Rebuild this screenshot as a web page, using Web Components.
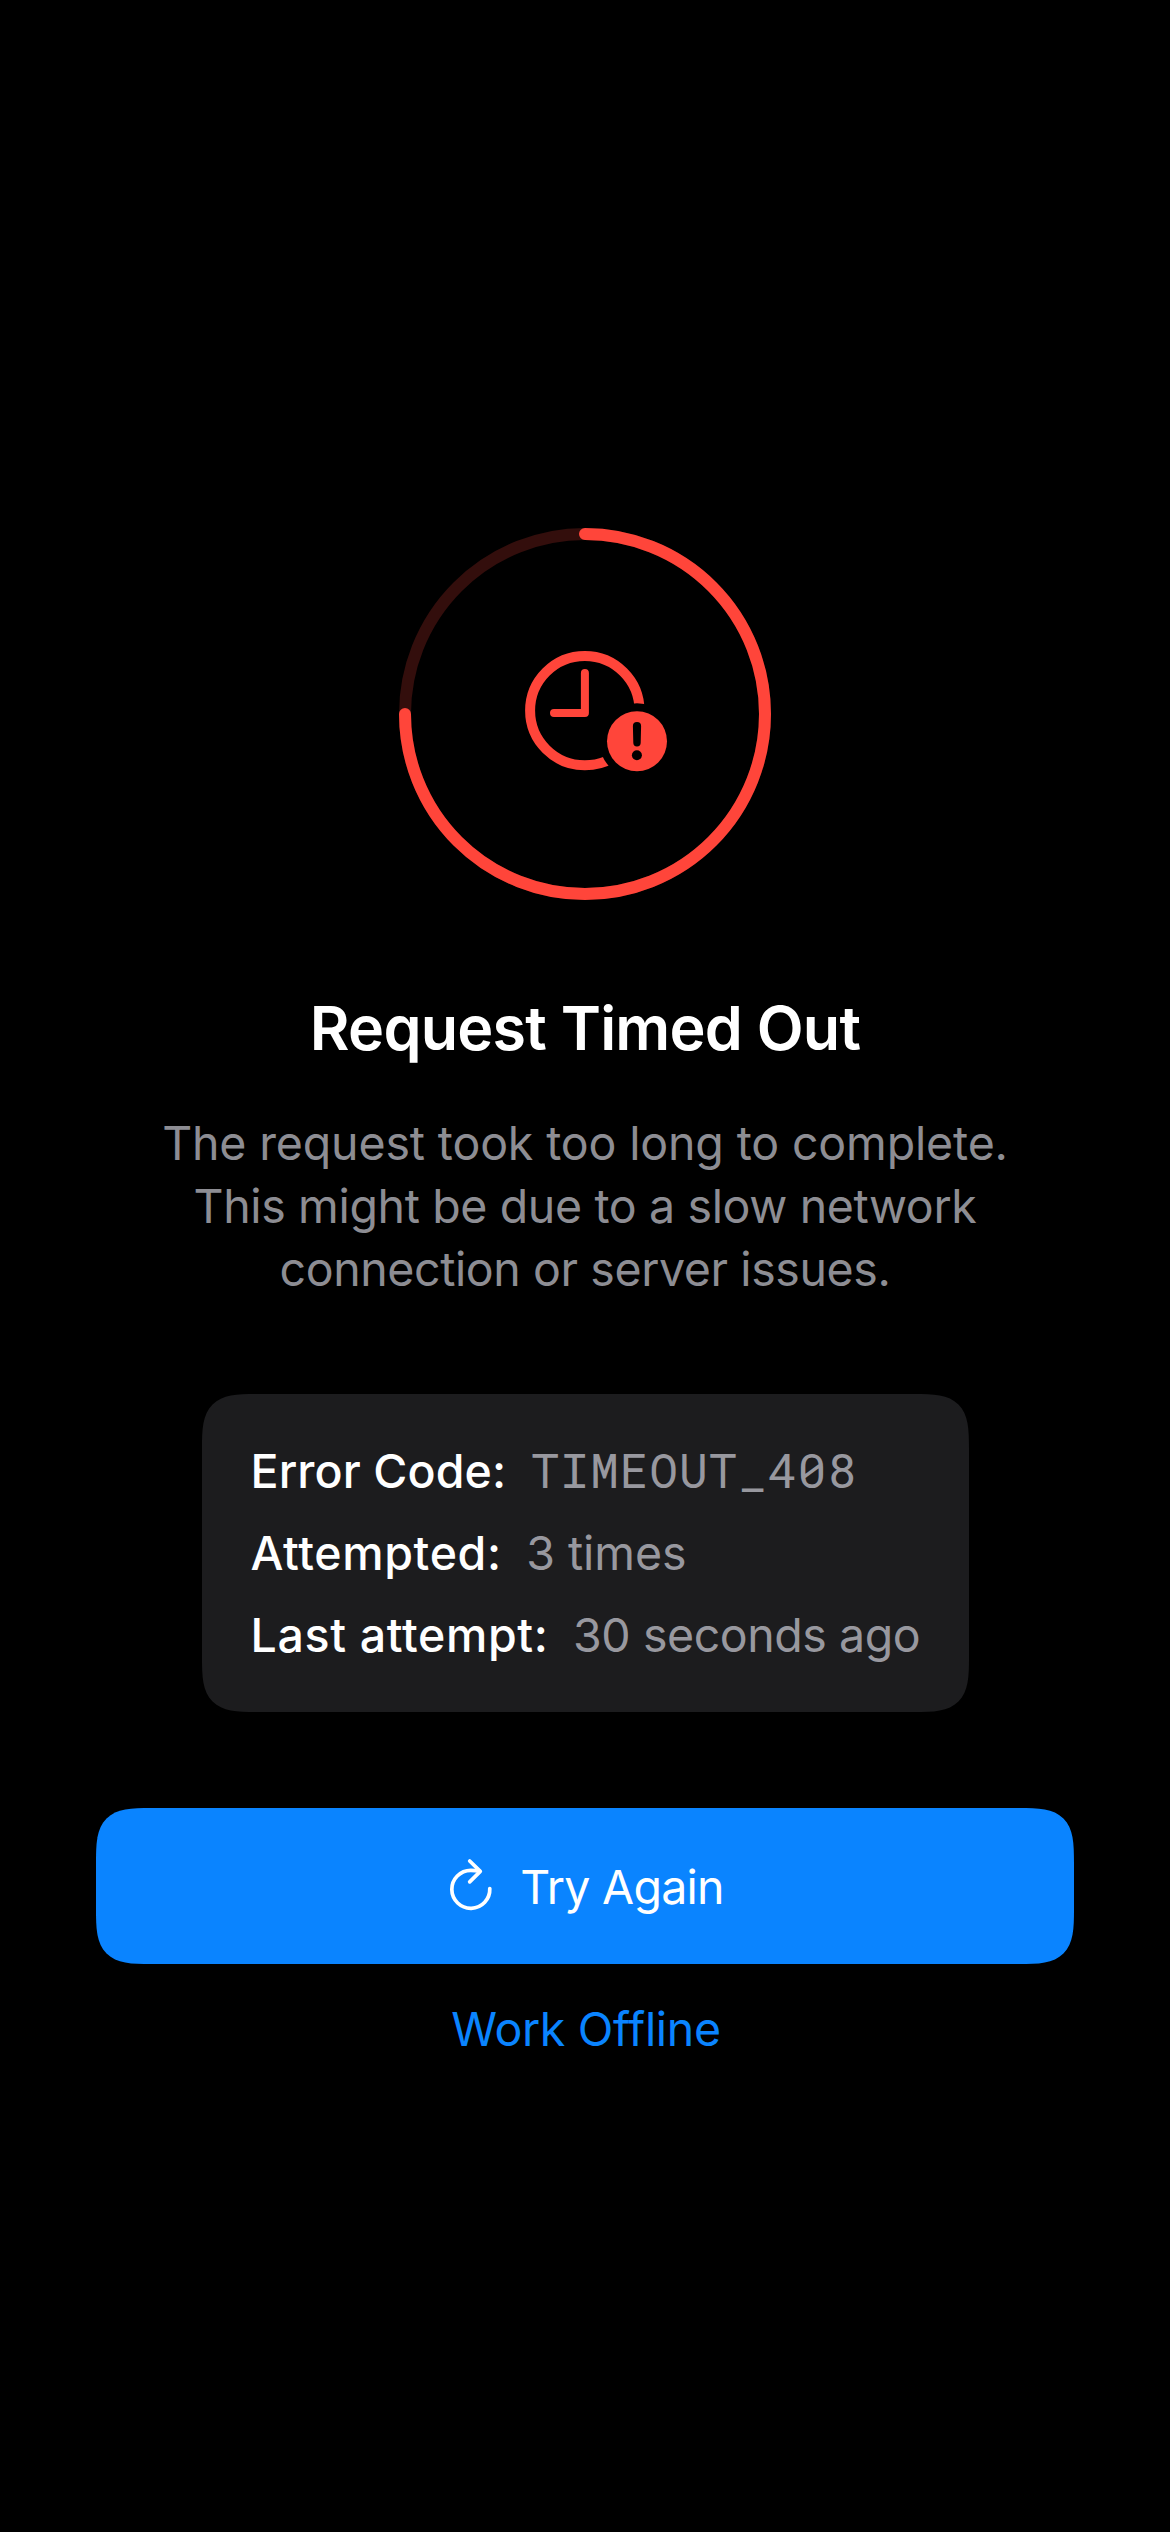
<!DOCTYPE html>
<html lang="en">
<head>
<meta charset="utf-8">
<title>Request Timed Out</title>
<style>
  html, body { margin: 0; background: #000; }
  body { font-family: Inter, "Liberation Sans", sans-serif; font-size: 46.5px; line-height: 58px; color: #fff; }
</style>
</head>
<body>
<timeout-screen>
  <timeout-ring slot="art"></timeout-ring>
  <screen-title slot="title">Request Timed Out</screen-title>
  <screen-message slot="message">
    <span style="letter-spacing:-.149px">The request took too long to complete.</span>
    <span style="letter-spacing:-.368px">This might be due to a slow network</span>
    <span style="letter-spacing:-.402px">connection or server issues.</span>
  </screen-message>
  <detail-card slot="details">
    <detail-row style="--label-track:.1px;--value-track:.85px" mono><span slot="label">Error Code:</span>TIMEOUT_408</detail-row>
    <detail-row style="--label-track:.651px;--value-track:-.069px"><span slot="label">Attempted:</span>3 times</detail-row>
    <detail-row style="--label-track:.653px;--value-track:-.433px"><span slot="label">Last attempt:</span>30 seconds ago</detail-row>
  </detail-card>
  <retry-button slot="actions">Try Again</retry-button>
  <link-button slot="actions">Work Offline</link-button>
</timeout-screen>

<script>
const define = (name, html) => {
  const template = document.createElement('template');
  template.innerHTML = html;
  customElements.define(name, class extends HTMLElement {
    constructor() {
      super();
      this.attachShadow({ mode: 'open' }).append(template.content.cloneNode(true));
    }
  });
};

define('timeout-screen', `
  <style>
    :host { display: flex; flex-direction: column; align-items: center; box-sizing: border-box; width: 1170px; height: 2532px; padding: 528px 96px 0; background: #000; overflow: hidden; }
    .title { margin-top: 90px; }
    .message { margin-top: 46px; }
    .details { margin-top: 93px; }
    .actions { margin-top: 96px; align-self: stretch; display: flex; flex-direction: column; align-items: stretch; gap: 36px; }
  </style>
  <slot name="art"></slot>
  <div class="title"><slot name="title"></slot></div>
  <div class="message"><slot name="message"></slot></div>
  <div class="details"><slot name="details"></slot></div>
  <div class="actions"><slot name="actions"></slot></div>`);

define('timeout-ring', `
  <style>
    :host { display: block; width: 372px; height: 372px; }
    svg { display: block; }
  </style>
  <svg width="372" height="372" viewBox="399 528 372 372" fill="none" stroke="#ff453a">
    <mask id="cut" maskUnits="userSpaceOnUse" x="500" y="630" width="180" height="160">
      <rect x="500" y="630" width="180" height="160" fill="#fff" stroke="none"/>
      <circle cx="637" cy="741" r="37.7" fill="#000" stroke="none"/>
    </mask>
    <circle cx="585" cy="714" r="180" stroke="#330e0c" stroke-width="12"/>
    <path d="M585 534A180 180 0 1 1 405 714" stroke-width="12" stroke-linecap="round"/>
    <circle cx="584.8" cy="710.6" r="54.7" stroke-width="10" mask="url(#cut)"/>
    <path d="M584.9 673V713H554" stroke-width="8" stroke-linecap="round" stroke-linejoin="round"/>
    <circle cx="637" cy="741.2" r="30" fill="#ff453a" stroke="none"/>
    <path d="M632.9 726a4.1 4.1 0 0 1 8.2 0L640.7 742.8a3.7 3.7 0 0 1-7.4 0Z" fill="#000" stroke="none"/>
    <circle cx="636.9" cy="755.3" r="5" fill="#000" stroke="none"/>
  </svg>`);

define('screen-title', `
  <style>
    :host { display: block; font-size: 61px; line-height: 76px; font-weight: 600; letter-spacing: -.77px; white-space: nowrap; }
  </style>
  <slot></slot>`);

define('screen-message', `
  <style>
    :host { display: flex; flex-direction: column; align-items: center; line-height: 63px; color: #8d8d93; white-space: nowrap; }
  </style>
  <slot></slot>`);

define('detail-card', `
  <style>
    :host { display: flex; flex-direction: column; gap: 24px; box-sizing: border-box; width: 767px; padding: 48px 45px 48px 49px; background: #1c1c1e; border-radius: 55px; corner-shape: superellipse(1.7); }
  </style>
  <slot></slot>`);

define('detail-row', `
  <style>
    :host { display: flex; gap: 24.5px; height: 58px; white-space: nowrap; }
    .label { font-weight: 500; letter-spacing: var(--label-track); }
    .value { color: #98989f; letter-spacing: var(--value-track); }
    :host([mono]) .value { font: 48px/55px "Roboto Mono", "Noto Sans Mono", "Liberation Mono", monospace; }
  </style>
  <span class="label"><slot name="label"></slot></span>
  <span class="value"><slot></slot></span>`);

define('retry-button', `
  <style>
    :host { display: block; }
    button { all: unset; display: flex; align-items: center; justify-content: center; gap: 28px; box-sizing: border-box; width: 100%; height: 156px; padding-left: 4px; background: #0a84ff; border-radius: 55px; corner-shape: superellipse(1.7); letter-spacing: -.725px; }
    svg { display: block; overflow: visible; }
    span { padding-top: 2px; }
  </style>
  <button>
    <svg width="42" height="54" viewBox="0 0 42 54" fill="none" stroke="#fff" stroke-width="3.7" stroke-linecap="round" stroke-linejoin="round">
      <path d="M39.8 29.5A19 19 0 1 1 20.8 11.3Q25.2 11.3 29.4 12.1"/>
      <path d="M19.7 2L30.3 12.4L19.7 22.9"/>
    </svg>
    <span><slot></slot></span>
  </button>`);

define('link-button', `
  <style>
    :host { display: block; }
    button { all: unset; display: block; box-sizing: border-box; width: 100%; padding-left: 2px; text-align: center; color: #0a84ff; letter-spacing: -.33px; }
  </style>
  <button><slot></slot></button>`);
</script>
</body>
</html>
